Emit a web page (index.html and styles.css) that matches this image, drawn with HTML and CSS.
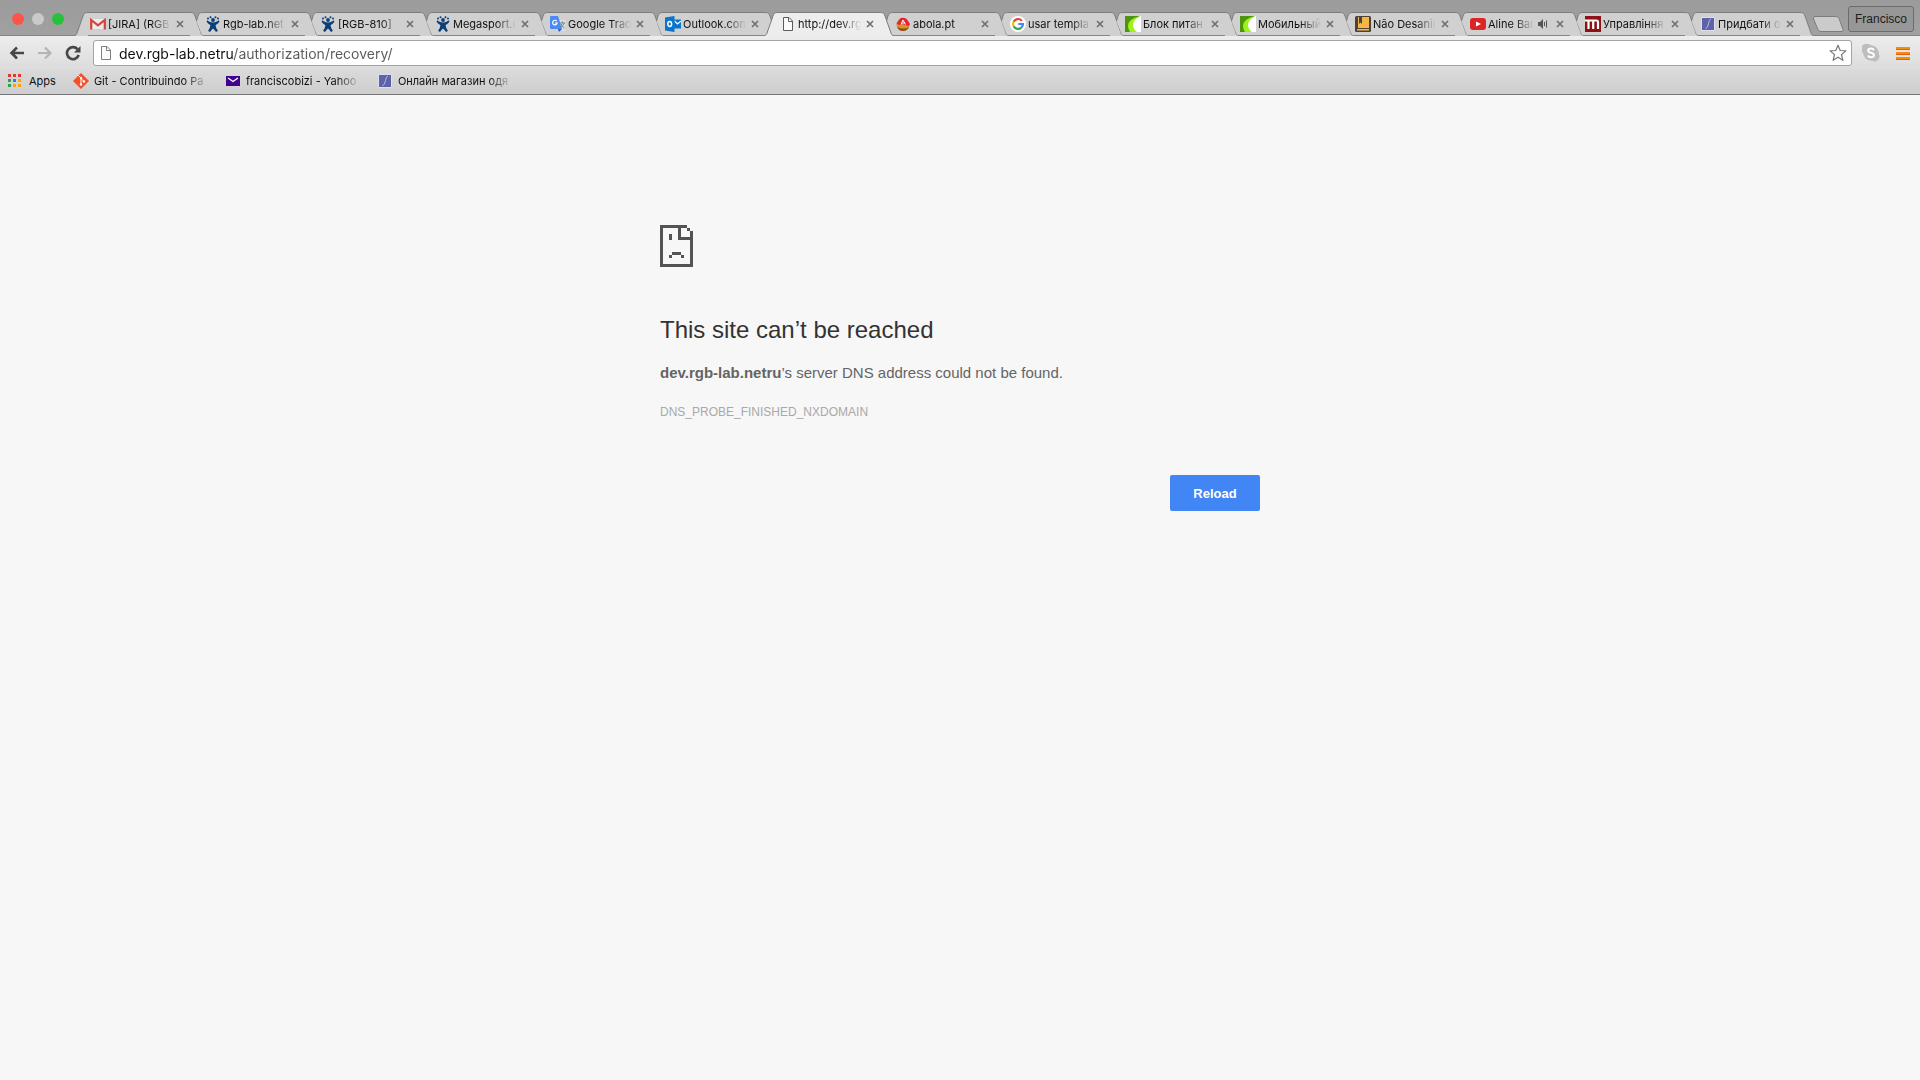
FILE: index.html
```html
<!DOCTYPE html>
<html lang="en">
<head>
    <meta charset="UTF-8">
    <meta name="viewport" content="width=device-width, initial-scale=1.0">
    <title>dev.rgb-lab.netru</title>
    <link rel="stylesheet" href="styles.css">
</head>
<body>

    <!-- shared icons -->
    <svg class="sprite" aria-hidden="true">
        <symbol id="edge-left" viewBox="0 0 13 24">
            <path class="fill" d="M0 24 C1 23 2 22 2 21 L8 4 C9 1 10 0 13 0 V24Z"/>
            <path class="line" d="M0 23.5 C1 23 2 22 2 21 L8 4 C9 1 10 0.5 13 0.5"/>
        </symbol>
        <symbol id="edge-cut" viewBox="0 0 13 24">
            <path class="fill" d="M6.5 9 L8 4 C9 1 10 0 13 0 V24 L11 21Z"/>
            <path class="line" d="M6.5 9 L8 4 C9 1 10 0.5 13 0.5"/>
        </symbol>
        <symbol id="edge-right" viewBox="0 0 13 24">
            <path class="fill" d="M13 24 C12 23 11 22 11 21 L5 4 C4 1 3 0 0 0 V24Z"/>
            <path class="line" d="M13 23.5 C12 23 11 22 11 21 L5 4 C4 1 3 0.5 0 0.5"/>
        </symbol>
        <symbol id="close" viewBox="0 0 10 10">
            <path d="M2 2 L8 8 M8 2 L2 8" stroke="#6e6e6e" stroke-width="1.6"/>
        </symbol>
        <symbol id="gmail" viewBox="0 0 16 16">
            <path d="M2 3h12v10H2z" fill="#ececec"/>
            <path d="M1.2 13.5V4L8 9.4 14.8 4v9.5" fill="none" stroke="#d5433a" stroke-width="2.2"/>
        </symbol>
        <symbol id="jira" viewBox="0 0 16 16">
            <g fill="#0d3f77">
                <circle cx="8" cy="4" r="1.9"/>
                <circle cx="5.5" cy="1.2" r="1"/>
                <circle cx="10.5" cy="1.2" r="1"/>
                <circle cx="3" cy="2.4" r="1"/>
                <circle cx="13" cy="2.4" r="1"/>
                <path d="M2 4.3C4 5.5 5 6.6 8 6.600S12 5.500 14 4.300L14.300 6C13 7.500 11.600 8.500 10.600 9.200 10.800 11.500 12 13.500 13 14.800L11 16C10 14.500 9 13.500 8 12.500 7 13.500 6 14.500 5 16L3 14.800C4 13.500 5.200 11.500 5.400 9.200 4.400 8.500 3 7.500 1.700 6Z"/>
            </g>
        </symbol>
        <symbol id="translate" viewBox="0 0 16 16">
            <path d="M6 4h9.5v11H9z" fill="#dcdcdc"/>
            <path d="M0 1q0-1 1-1h7l4 13H1q-1 0-1-1z" fill="#4a8af4"/>
            <path d="M8 13h4l-3 3z" fill="#3a56c5"/>
            <path d="M6.8 5.2A2.3 2.3 0 1 0 7.2 7H5" fill="none" stroke="#fff" stroke-width="1.2"/>
            <path d="M10 7h5M12.5 5.5V7M14 7q-1 3-3.5 5M11 8q1 3 3.5 4" fill="none" stroke="#6d8796"/>
        </symbol>
        <symbol id="outlook" viewBox="0 0 16 16">
            <path d="M9 3.5h7v9H9z" fill="#0a74cc"/>
            <path d="M9.5 5l3 3L16 5" fill="none" stroke="#fff" stroke-width="1.2"/>
            <path d="M0 1.5L9.5 0v16L0 14.5z" fill="#0a74cc"/>
            <ellipse cx="4.7" cy="8" rx="1.9" ry="2.5" fill="none" stroke="#fff" stroke-width="1.5"/>
        </symbol>
        <symbol id="page" viewBox="0 0 16 16">
            <path d="M3.5 1.5h5.5l3.5 3.5v9.5h-9z" fill="#fafafa" stroke="currentColor"/>
            <path d="M8.5 1.5v4h4" fill="none" stroke="currentColor"/>
        </symbol>
        <symbol id="abola" viewBox="0 0 16 16">
            <circle cx="8" cy="8.5" r="6.5" fill="#d9952b"/>
            <path d="M2 11a6.5 6.5 0 0 0 12 0q-5 3-12 0z" fill="#8a5418"/>
            <path d="M1.5 8L5 2.5Q8 1 11.5 3L15 8l-1 2-4-1-2-1-3 1z" fill="#e62434"/>
            <path d="M6 8.5L8 4l2.5 4.500M6.800 7h2.800" fill="none" stroke="#fff"/>
        </symbol>
        <symbol id="google" viewBox="0 0 16 16">
            <circle cx="8" cy="8" r="8" fill="#fff"/>
            <g fill="none" stroke-width="2.2">
                <path d="M11.8 4.7A5 5 0 0 0 3.6 5.7" stroke="#ea4335"/>
                <path d="M3.6 5.7A5 5 0 0 0 3.6 10.3" stroke="#fbbc05"/>
                <path d="M3.6 10.3A5 5 0 0 0 11.3 11.7" stroke="#34a853"/>
                <path d="M11.3 11.7A5 5 0 0 0 13 8H8.3" stroke="#4285f4"/>
            </g>
        </symbol>
        <symbol id="rozetka" viewBox="0 0 16 16">
            <path d="M0 0h16v16H0z" fill="#fff"/>
            <path d="M0 0h15Q7 4 7 9t4 7H0z" fill="#4f9410"/>
            <path d="M15 0Q3 3 3 10q0 3 2 6h7Q8 13 8 8.500T15 0z" fill="#9df21a"/>
        </symbol>
        <symbol id="book" viewBox="0 0 16 16">
            <path d="M1.5 0h13q1.5 0 1.5 1.5v13q0 1.500-1.500 1.500h-13Q0 16 0 14.500v-13Q0 0 1.500 0z" fill="#4a423b"/>
            <path d="M3 1h11v11H3zM2 13h12v1.500H2z" fill="#f6b645"/>
            <path d="M4 0h3v8L5.500 6.500 4 8z" fill="#4a423b"/>
        </symbol>
        <symbol id="youtube" viewBox="0 0 16 16">
            <rect y="2" width="16" height="12" rx="3" fill="#dd2525"/>
            <path d="M6 5.5v5L11 8z" fill="#fff"/>
        </symbol>
        <symbol id="mred" viewBox="0 0 16 16">
            <path d="M0 0h16v16H0z" fill="#8c1216"/>
            <path d="M0 4.500h11.500q1.500 0 1.500 1.500V13M3.500 4.500V13M8.200 4.500V13" fill="none" stroke="#fff" stroke-width="2.200"/>
        </symbol>
        <symbol id="script" viewBox="0 0 16 16">
            <path d="M1.5 1.5h13v13h-13z" fill="#5d62a9" stroke="#dfe0ee"/>
            <path d="M11 3Q9 3.500 8.500 7.500T5.500 13" fill="none" stroke="#c3c6e6" stroke-width=".9"/>
        </symbol>
    </svg>

    <header class="browser">
        <div class="tab-strip">
            <div class="window-buttons">
                <button class="dot red" aria-label="Close window"></button>
                <button class="dot grey" aria-label="Minimize"></button>
                <button class="dot green" aria-label="Full screen"></button>
            </div>

            <nav class="tabs">
                <div class="tab">
                    <svg class="edge"><use href="#edge-left"/></svg>
                    <div class="tab-body"><svg class="favicon"><use href="#gmail"/></svg><a href="#">[JIRA] (RGB</a><button class="close" aria-label="Close tab"><svg><use href="#close"/></svg></button></div>
                    <svg class="edge"><use href="#edge-right"/></svg>
                </div>
                <div class="tab">
                    <svg class="edge"><use href="#edge-cut"/></svg>
                    <div class="tab-body"><svg class="favicon"><use href="#jira"/></svg><a href="#">Rgb-lab.net</a><button class="close" aria-label="Close tab"><svg><use href="#close"/></svg></button></div>
                    <svg class="edge"><use href="#edge-right"/></svg>
                </div>
                <div class="tab">
                    <svg class="edge"><use href="#edge-cut"/></svg>
                    <div class="tab-body"><svg class="favicon"><use href="#jira"/></svg><a href="#">[RGB-810]</a><button class="close" aria-label="Close tab"><svg><use href="#close"/></svg></button></div>
                    <svg class="edge"><use href="#edge-right"/></svg>
                </div>
                <div class="tab">
                    <svg class="edge"><use href="#edge-cut"/></svg>
                    <div class="tab-body"><svg class="favicon"><use href="#jira"/></svg><a href="#">Megasport.u</a><button class="close" aria-label="Close tab"><svg><use href="#close"/></svg></button></div>
                    <svg class="edge"><use href="#edge-right"/></svg>
                </div>
                <div class="tab">
                    <svg class="edge"><use href="#edge-cut"/></svg>
                    <div class="tab-body"><svg class="favicon"><use href="#translate"/></svg><a href="#">Google Trad</a><button class="close" aria-label="Close tab"><svg><use href="#close"/></svg></button></div>
                    <svg class="edge"><use href="#edge-right"/></svg>
                </div>
                <div class="tab">
                    <svg class="edge"><use href="#edge-cut"/></svg>
                    <div class="tab-body"><svg class="favicon"><use href="#outlook"/></svg><a href="#">Outlook.com</a><button class="close" aria-label="Close tab"><svg><use href="#close"/></svg></button></div>
                    <svg class="edge"><use href="#edge-right"/></svg>
                </div>
                <div class="tab active">
                    <svg class="edge"><use href="#edge-left"/></svg>
                    <div class="tab-body"><svg class="favicon"><use href="#page"/></svg><a href="#">http://dev.rg</a><button class="close" aria-label="Close tab"><svg><use href="#close"/></svg></button></div>
                    <svg class="edge"><use href="#edge-right"/></svg>
                </div>
                <div class="tab">
                    <svg class="edge"><use href="#edge-cut"/></svg>
                    <div class="tab-body"><svg class="favicon"><use href="#abola"/></svg><a href="#">abola.pt</a><button class="close" aria-label="Close tab"><svg><use href="#close"/></svg></button></div>
                    <svg class="edge"><use href="#edge-right"/></svg>
                </div>
                <div class="tab">
                    <svg class="edge"><use href="#edge-cut"/></svg>
                    <div class="tab-body"><svg class="favicon"><use href="#google"/></svg><a href="#">usar templa</a><button class="close" aria-label="Close tab"><svg><use href="#close"/></svg></button></div>
                    <svg class="edge"><use href="#edge-right"/></svg>
                </div>
                <div class="tab">
                    <svg class="edge"><use href="#edge-cut"/></svg>
                    <div class="tab-body"><svg class="favicon"><use href="#rozetka"/></svg><a href="#">Блок питан</a><button class="close" aria-label="Close tab"><svg><use href="#close"/></svg></button></div>
                    <svg class="edge"><use href="#edge-right"/></svg>
                </div>
                <div class="tab">
                    <svg class="edge"><use href="#edge-cut"/></svg>
                    <div class="tab-body"><svg class="favicon"><use href="#rozetka"/></svg><a href="#">Мобильный</a><button class="close" aria-label="Close tab"><svg><use href="#close"/></svg></button></div>
                    <svg class="edge"><use href="#edge-right"/></svg>
                </div>
                <div class="tab">
                    <svg class="edge"><use href="#edge-cut"/></svg>
                    <div class="tab-body"><svg class="favicon"><use href="#book"/></svg><a href="#">Não Desanim</a><button class="close" aria-label="Close tab"><svg><use href="#close"/></svg></button></div>
                    <svg class="edge"><use href="#edge-right"/></svg>
                </div>
                <div class="tab">
                    <svg class="edge"><use href="#edge-cut"/></svg>
                    <div class="tab-body">
                        <svg class="favicon"><use href="#youtube"/></svg><a href="#">Aline Bar</a>
                        <svg class="speaker" viewBox="0 0 10 10"><path d="M0 3h2l3-3v10L2 7H0z" fill="#555"/><path d="M6.5 3v4M8.5 1.5v7" stroke="#555"/></svg>
                        <button class="close" aria-label="Close tab"><svg><use href="#close"/></svg></button>
                    </div>
                    <svg class="edge"><use href="#edge-right"/></svg>
                </div>
                <div class="tab">
                    <svg class="edge"><use href="#edge-cut"/></svg>
                    <div class="tab-body"><svg class="favicon"><use href="#mred"/></svg><a href="#">Управління</a><button class="close" aria-label="Close tab"><svg><use href="#close"/></svg></button></div>
                    <svg class="edge"><use href="#edge-right"/></svg>
                </div>
                <div class="tab">
                    <svg class="edge"><use href="#edge-cut"/></svg>
                    <div class="tab-body"><svg class="favicon"><use href="#script"/></svg><a href="#">Придбати о</a><button class="close" aria-label="Close tab"><svg><use href="#close"/></svg></button></div>
                    <svg class="edge"><use href="#edge-right"/></svg>
                </div>
            </nav>

            <button class="new-tab" aria-label="New tab">
                <svg viewBox="0 0 32 16"><path d="M3 .5h21q2 0 3 2l4 11q.5 2-1 2H9q-2 0-3-2L1.500 3Q1 .5 3 .5z" fill="#cbcbcb" stroke="#7d7d7d"/></svg>
            </button>
            <button class="profile">Francisco</button>
        </div>

        <div class="toolbar">
            <button class="nav-button" aria-label="Back">
                <svg viewBox="0 0 16 16"><path d="M8 2.500L2.500 8 8 13.500M2.500 8H15" fill="none" stroke="#474747" stroke-width="2.600"/></svg>
            </button>
            <button class="nav-button" aria-label="Forward">
                <svg viewBox="0 0 16 16"><path d="M8 2.500L13.500 8 8 13.500M13.500 8H1" fill="none" stroke="#b4b4b4" stroke-width="2.200"/></svg>
            </button>
            <button class="nav-button" aria-label="Reload page">
                <svg viewBox="0 0 16 16"><path d="M12.500 4.200A6 6 0 1 0 13.700 10" fill="none" stroke="#474747" stroke-width="2.600"/><path d="M15.500 1v6.500H9z" fill="#474747"/></svg>
            </button>
            <div class="address">
                <svg class="favicon"><use href="#page"/></svg>
                <input type="text" aria-label="Address" value="dev.rgb-lab.netru/authorization/recovery/">
                <button class="star" aria-label="Bookmark this page">
                    <svg viewBox="0 0 18 18"><path d="M9 1.200l2.200 5.300 5.700.4-4.400 3.700 1.400 5.700L9 13.200l-4.900 3.100 1.400-5.700L1.100 6.900l5.700-.4z" fill="#fff" stroke="#777" stroke-width="1.200" stroke-linejoin="round"/></svg>
                </button>
            </div>
            <button class="extension" aria-label="Skype">
                <svg viewBox="0 0 18 18"><path d="M5 0a5 5 0 0 1 4 1.200A8 8 0 0 1 16.800 10 5 5 0 0 1 10 16.800 8 8 0 0 1 1.200 9 5 5 0 0 1 5 0z" fill="#bdbdbd"/><path d="M12 6.200Q11 4.500 9 4.500 6.200 4.500 6.200 6.500 6.200 8.200 9 8.800T11.900 11Q11.900 13.300 9 13.300 6.800 13.300 5.900 11.500" fill="none" stroke="#fff" stroke-width="2"/></svg>
            </button>
            <button class="menu" aria-label="Menu"><span></span><span></span><span></span></button>
        </div>

        <nav class="bookmarks">
            <a class="apps" href="#">
                <svg viewBox="0 0 14 14">
                    <path d="M0 0h3v3H0zM5 0h3v3H5zM10 0h3v3h-3z" fill="#e8352b"/>
                    <path d="M0 5h3v3H0zM0 10h3v3H0z" fill="#2f9e4f"/>
                    <path d="M5 5h3v3H5z" fill="#2f7de1"/>
                    <path d="M10 5h3v3h-3zM5 10h3v3H5zM10 10h3v3h-3z" fill="#f6a60c"/>
                </svg>
                <span>Apps</span>
            </a>
            <a class="bookmark" href="#">
                <svg viewBox="0 0 16 16"><path d="M8 0l8 8-8 8-8-8z" fill="#f34f29"/><path d="M5.500 2.500L8 5v6M8 5.500L11 8.500" fill="none" stroke="#fff"/><circle cx="8" cy="5" r="1.200" fill="#fff"/><circle cx="8" cy="11.500" r="1.200" fill="#fff"/><circle cx="11" cy="8.500" r="1.200" fill="#fff"/></svg>
                <span>Git - Contribuindo Pa</span>
            </a>
            <a class="bookmark" href="#">
                <svg viewBox="0 0 16 16"><path d="M1 3h14v10H1z" fill="#400090"/><path d="M3 5l5 3.500L13 5" fill="none" stroke="#fff" stroke-width="1.300"/></svg>
                <span>franciscobizi - Yahoo</span>
            </a>
            <a class="bookmark" href="#">
                <svg><use href="#script"/></svg>
                <span>Онлайн магазин одя</span>
            </a>
        </nav>
    </header>

    <main class="error">
        <svg class="sad-page" viewBox="0 0 11 14" shape-rendering="crispEdges">
            <path d="M0 0h9v1H0zM0 1h1v12H0zM0 13h11v1H0zM10 2h1v11h-1zM9 1h1v1H9zM6 1h1v3H6zM6 4h4v1H6zM3 3h1v2H3zM4 9h3v1H4zM3 10h1v1H3zM7 10h1v1H7z" fill="#535353"/>
        </svg>
        <h1>This site can’t be reached</h1>
        <p><strong>dev.rgb-lab.netru</strong>’s server DNS address could not be found.</p>
        <div class="error-code">DNS_PROBE_FINISHED_NXDOMAIN</div>
        <button class="reload">Reload</button>
    </main>

</body>
</html>
```
FILE: styles.css
```css
* {
    box-sizing: border-box;
}
body {
    margin: 0;
    min-height: 100vh;
    background-color: #f7f7f7;
    font-family: "Liberation Sans", Arial, sans-serif;
}
button {
    padding: 0;
    border: none;
    background: none;
    font-family: inherit;
    cursor: pointer;
}
svg {
    display: block;
    flex: none;
}
a {
    color: #111;
    text-decoration: none;
}
.sprite {
    position: absolute;
    width: 0;
    height: 0;
}
.browser {
    font-family: Inter, "Noto Sans", sans-serif;
    border-bottom: 1px solid #747474;
}

/* tab strip */
.tab-strip {
    display: flex;
    align-items: flex-end;
    height: 36px;
    padding-right: 6px;
    background: linear-gradient(#9b9b9b, #a1a1a1);
    box-shadow: inset 0 -1px #868686;
}
.window-buttons {
    display: flex;
    flex: none;
    gap: 8px;
    width: 75px;
    padding: 0 0 11px 12px;
}
.dot {
    width: 12px;
    height: 12px;
    border-radius: 50%;
}
.red {
    background-color: #fc534b;
}
.grey {
    background-color: #cacaca;
}
.green {
    background-color: #28c13a;
}
.tabs {
    display: flex;
    min-width: 0;
    padding-right: 12px;
}
.tab {
    display: flex;
    width: 128px;
    min-width: 0;
    height: 24px;
    margin-right: -13px;
    color: #d0d0d0;
}
.tab.active {
    position: relative;
    color: #ededed;
}
.edge {
    width: 13px;
    height: 24px;
}
.fill {
    fill: currentColor;
}
.line {
    fill: none;
    stroke: #7c7c7c;
}
.tab-body {
    display: flex;
    align-items: center;
    flex: 1;
    min-width: 0;
    padding: 0 5px 0 2px;
    border-top: 1px solid #7c7c7c;
    border-bottom: 1px solid #868686;
    background-color: currentColor;
}
.active .tab-body {
    border-bottom-color: #ededed;
}
.favicon {
    width: 16px;
    height: 16px;
    color: #5c5c5c;
}
.tab a {
    flex: 1;
    min-width: 0;
    margin-left: 2px;
    overflow: hidden;
    white-space: nowrap;
    font-size: 11px;
    line-height: 20px;
    -webkit-mask-image: linear-gradient(to left, transparent, #000 20px);
    mask-image: linear-gradient(to left, transparent, #000 20px);
}
.speaker {
    width: 10px;
    height: 10px;
    margin: 0 3px 0 4px;
}
.close {
    flex: none;
    margin-left: 4px;
}
.close svg {
    width: 10px;
    height: 10px;
}
.new-tab {
    flex: none;
    margin-bottom: 4px;
}
.new-tab svg {
    width: 32px;
    height: 16px;
}
.profile {
    flex: none;
    height: 26px;
    margin: 0 0 4px auto;
    padding: 0 6px;
    border: 1px solid #6c6c6c;
    border-radius: 3px;
    background-color: #979797;
    color: #1c1c1c;
    font-family: "Liberation Sans", Arial, sans-serif;
    font-size: 12px;
}

/* toolbar */
.toolbar {
    display: flex;
    align-items: center;
    height: 34px;
    padding: 0 10px 0 9px;
    background: linear-gradient(#ededed, #dcdcdc);
}
.nav-button {
    flex: none;
    margin-right: 12px;
}
.nav-button svg {
    width: 16px;
    height: 16px;
}
.address {
    display: flex;
    align-items: center;
    flex: 1;
    height: 26px;
    padding: 0 4px;
    border: 1px solid #a3a3a3;
    border-radius: 3px;
    background-color: #fff;
}
.address .favicon {
    color: #7d7d7d;
}
.address input {
    flex: 1;
    min-width: 0;
    height: 24px;
    padding: 0 0 0 5px;
    border: none;
    outline: none;
    /* the host is darker than the rest of the address */
    background: linear-gradient(to right, #111 119px, #5a5a5a 119px);
    background-clip: text;
    -webkit-background-clip: text;
    -webkit-text-fill-color: transparent;
    font-family: inherit;
    font-size: 14px;
}
.star svg {
    width: 18px;
    height: 18px;
}
.extension {
    margin-left: 10px;
}
.extension svg {
    width: 18px;
    height: 18px;
}
.menu {
    display: flex;
    flex-direction: column;
    gap: 2px;
    margin-left: 16px;
}
.menu span {
    width: 14px;
    height: 3px;
    border-bottom: 1px solid #e2620c;
    background-color: #f78b12;
}

/* bookmarks */
.bookmarks {
    display: flex;
    align-items: center;
    height: 24px;
    padding: 0 0 2px 8px;
    background: linear-gradient(#dadada, #cecece);
    font-size: 11px;
    line-height: 16px;
}
.bookmarks a {
    display: flex;
    align-items: center;
}
.apps {
    gap: 7px;
    margin-right: 17px;
}
.apps svg {
    width: 14px;
    height: 14px;
}
.bookmark {
    gap: 5px;
    width: 136px;
    margin-right: 16px;
}
.bookmark svg {
    width: 16px;
    height: 16px;
}
.bookmark span {
    flex: 1;
    overflow: hidden;
    white-space: nowrap;
    -webkit-mask-image: linear-gradient(to left, transparent, #000 24px);
    mask-image: linear-gradient(to left, transparent, #000 24px);
}

/* error page */
.error {
    display: flex;
    flex-direction: column;
    max-width: 600px;
    margin: 0 auto;
    padding-top: 130px;
    color: #646464;
    font-size: 15px;
    line-height: 24px;
}
.sad-page {
    width: 33px;
    height: 42px;
}
.error h1 {
    margin: 48px 0 16px;
    color: #333;
    font-size: 24px;
    font-weight: 500;
    line-height: 30px;
}
.error p {
    margin: 0;
}
.error-code {
    margin-top: 16px;
    color: #a8a8a8;
    font-size: 12px;
    line-height: 22px;
}
.reload {
    align-self: flex-end;
    width: 90px;
    height: 36px;
    margin-top: 52px;
    border-radius: 2px;
    background-color: #4285f4;
    color: #fff;
    font-size: 13px;
    font-weight: bold;
}
```
